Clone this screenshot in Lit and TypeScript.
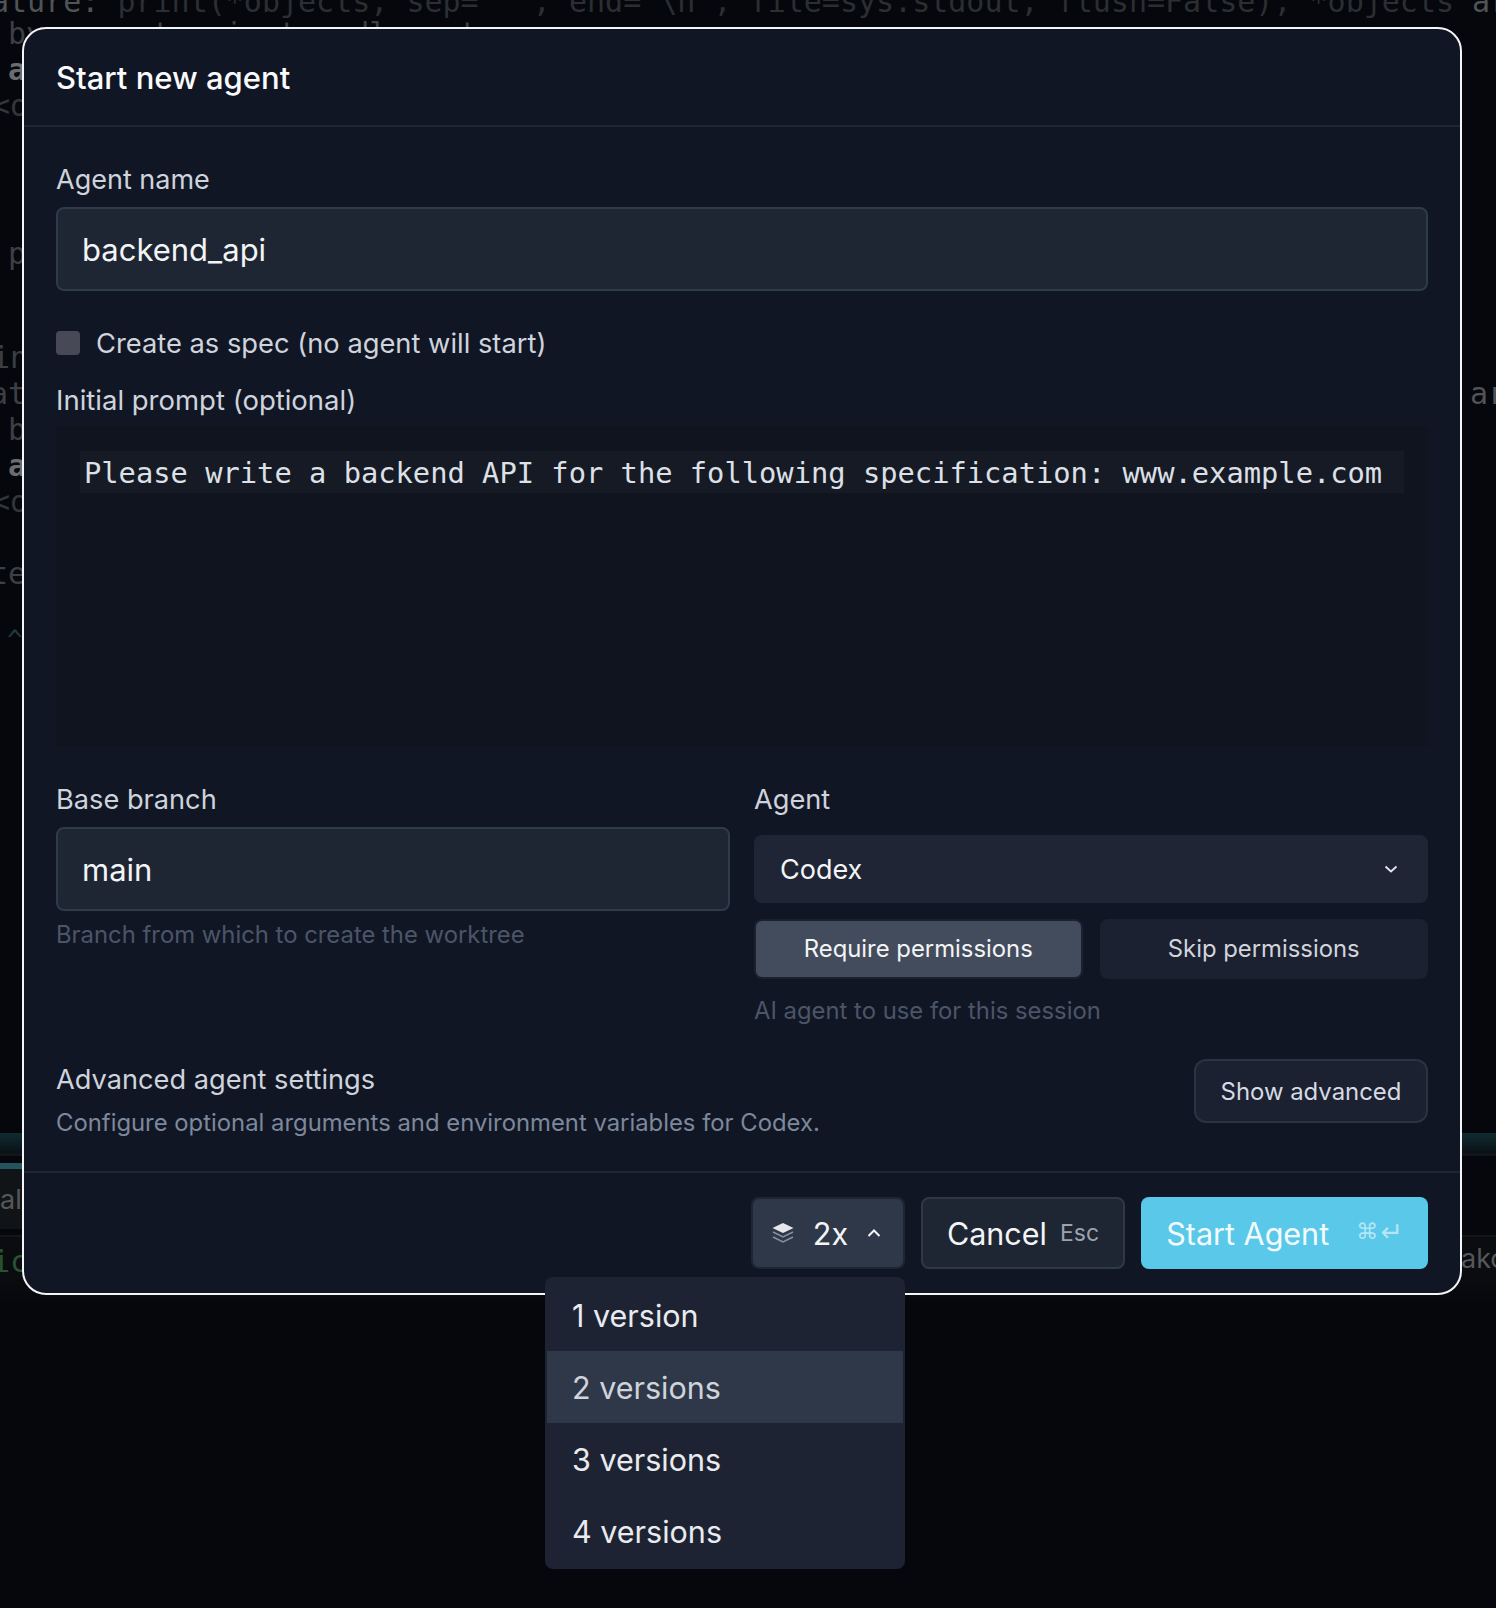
import { LitElement, html, css } from "lit";
import { customElement } from "lit/decorators.js";

@customElement("app-root")
export class AppRoot extends LitElement {
  static styles = css`
    :host { display: block; position: relative; width: 1496px; height: 1608px; overflow: hidden; background: #05070c; font-family: Inter, "Noto Sans", sans-serif; color: #f3f4f6; }
    * { box-sizing: border-box; }
    .bg { position: absolute; inset: 0; font-family: "DejaVu Sans Mono", monospace; font-size: 30px; color: #3c3f44; }
    .bg span { position: absolute; white-space: pre; line-height: 36px; }
    .bg span span { position: static; }
    .bg .dim { color: #2b2e33; }
    .bg .hid { color: #0c0e12; }
    .bg .lit { color: #505357; }
    .bg .faint { color: #33363b; }
    .bg .bold { font-weight: 700; color: #6a6d70; }
    .bg .green { color: #2a5230; }
    .bg .caret { color: #1f3a3e; font-size: 26px; }
    .bg .sans { font-family: Inter, sans-serif; color: #55585b; font-size: 27px; }
    .bar1 { position: absolute; left: 0; right: 0; top: 1133px; height: 20px; background: linear-gradient(#0f2c31, #0a1116); }
    .bar1b { position: absolute; left: 0; right: 0; top: 1153px; height: 3px; background: #10151a; }
    .bar2 { position: absolute; left: 0; width: 30px; top: 1163px; height: 6px; background: #24555f; }
    .bar3 { position: absolute; left: 0; width: 30px; top: 1169px; height: 60px; background: #101417; }
    .bar4 { position: absolute; left: 0; right: 0; top: 1235px; height: 70px; background: linear-gradient(#0a0c10 60%, #05070c); border-top: 2px solid #14171a; }
    .modal { position: absolute; left: 22px; top: 27px; width: 1440px; height: 1268px; display: flex; flex-direction: column; background: #111625; border: 2px solid #f4f5f7; border-radius: 24px; }
    .head { height: 98px; padding: 0 32px; display: flex; align-items: center; border-bottom: 2px solid #1e2533; font-size: 31px; font-weight: 500; color: #f9fafb; }
    .body { flex: 1; padding: 32px 32px 0; display: flex; flex-direction: column; }
    label, .lbl { display: block; font-size: 27.2px; line-height: 40px; color: #ced3dc; }
    .top-label { padding-top: 1px; font-size: 27px; }
    .input { height: 84px; margin-top: 7px; padding: 0 24px; display: flex; align-items: center; background: #1e2533; border: 2px solid #2f3a4b; border-radius: 8px; font-size: 31px; color: #f3f4f6; }
    .check { display: flex; align-items: center; gap: 16px; margin-top: 32px; height: 40px; font-size: 27.3px; color: #ced3dc; }
    .box { width: 24px; height: 24px; border-radius: 4px; background: #474a56; }
    .prompt-label { margin-top: 15px; padding-top: 2px; font-size: 27.5px; }
    .prompt { margin-top: 6px; height: 320px; padding: 25px 24px; background: #0f141e; }
    .line { font-family: "DejaVu Sans Mono", monospace; font-size: 28.75px; line-height: 44px; white-space: pre; color: #dde0e6; background: #151a25; padding: 0 4px; height: 42px; }
    .cols { display: grid; grid-template-columns: 1fr 1fr; gap: 24px; margin-top: 33px; }
    .cols label { padding-top: 1px; }
    .cols .input { margin-top: 7px; }
    .hint { font-size: 23.85px; line-height: 36px; color: #4b5568; margin-top: 6px; }
    .hint.agent { margin-top: 14px; }
    .select { height: 68px; margin-top: 15px; padding: 0 30px 0 26px; display: flex; align-items: center; justify-content: space-between; background: #1f2535; border-radius: 8px; font-size: 27px; color: #f3f4f6; }
    .seg { display: grid; grid-template-columns: 1fr 1fr; gap: 17px; margin-top: 16px; }
    .seg div { height: 60px; padding-bottom: 1px; display: flex; align-items: center; justify-content: center; border-radius: 8px; font-size: 23.85px; background: #1b2131; color: #d1d5db; }
    .seg .on { background: #434c5c; color: #f3f4f6; border: 2px solid #1b2131; }
    .adv { display: flex; justify-content: space-between; align-items: flex-start; margin-top: 31px; }
    .adv .desc { font-size: 23.85px; line-height: 36px; color: #7c889b; margin-top: 5px; }
    .btn-adv { height: 64px; width: 234px; margin-top: -1px; display: flex; align-items: center; justify-content: center; border: 2px solid #2b3342; border-radius: 12px; background: #1b2131; font-size: 23.9px; color: #d6dae1; }
    .foot { height: 122px; padding: 0 32px; border-top: 2px solid #1e2533; display: flex; align-items: center; justify-content: flex-end; gap: 16px; }
    .btn { height: 72px; display: flex; align-items: center; border-radius: 8px; font-size: 30.5px; }
    .ver { width: 154px; padding-right: 3px; background: #2f3848; border: 2px solid #1e2533; justify-content: center; gap: 19px; color: #f3f4f6; }
    .cancel { width: 204px; background: #1e2533; border: 2px solid #2f3848; justify-content: center; gap: 13px; color: #f3f4f6; }
    .cancel small { font-size: 23px; color: #9ca3af; }
    .start { width: 287px; background: #5ac8e8; color: #f4fbfe; justify-content: center; gap: 27px; }
    .keys { display: flex; align-items: center; gap: 2px; font-family: "DejaVu Sans", sans-serif; color: #b4e5f4; line-height: 20px; margin-top: -2px; }
    .keys .cmd { font-size: 22px; }
    .keys .ret { font-size: 27px; }
    .menu { position: absolute; left: 545px; top: 1277px; width: 360px; height: 292px; padding: 2px; background: #1e2333; border-radius: 8px; }
    .menu div { height: 72px; padding: 0 25px; display: flex; align-items: center; font-size: 30.5px; color: #e9ebef; }
    .menu .sel { background: #2f3848; color: #ced3dc; }
  `;

  render() {
    return html`
      <div class="bar1"></div><div class="bar1b"></div><div class="bar2"></div><div class="bar3"></div><div class="bar4"></div>
      <div class="bg">
        <span class="dim" style="left:-9px;top:-16px"><span class="lit">ature:</span> print(*objects, sep=<span class="hid">' '</span>, end=<span class="hid">'</span>\\n<span class="hid">'</span>, file=sys.stdout, flush=False), *objects <span class="lit">ar</span></span>
        <span style="left:8px;top:16px">by      t   i  t   dl    t</span>
        <span class="bold" style="left:8px;top:52px">a</span>
        <span class="faint" style="left:-8px;top:88px">&lt;o</span>
        <span style="left:8px;top:236px">p</span>
        <span style="left:-14px;top:296px">-</span>
        <span style="left:-8px;top:340px">in</span>
        <span style="left:-10px;top:376px">at</span>
        <span style="left:8px;top:412px">b</span>
        <span class="bold" style="left:8px;top:448px">a</span>
        <span class="faint" style="left:-8px;top:484px">&lt;o</span>
        <span style="left:-10px;top:556px">te</span>
        <span class="caret" style="left:7px;top:622px">^</span>
        <span class="lit" style="left:1470px;top:376px">ar</span>
        <span class="green" style="left:-8px;top:1244px">ic</span>
        <span class="sans" style="left:0;top:1182px">al</span>
        <span class="sans" style="left:1461px;top:1241px">ako</span>
      </div>
      <div class="modal">
        <div class="head">Start new agent</div>
        <div class="body">
          <label class="top-label">Agent name</label>
          <div class="input">backend_api</div>
          <div class="check"><span class="box"></span>Create as spec (no agent will start)</div>
          <label class="prompt-label">Initial prompt (optional)</label>
          <div class="prompt"><div class="line">Please write a backend API for the following specification: www.example.com</div></div>
          <div class="cols">
            <div>
              <label>Base branch</label>
              <div class="input">main</div>
              <div class="hint">Branch from which to create the worktree</div>
            </div>
            <div>
              <label>Agent</label>
              <div class="select">Codex
                <svg width="14" height="10" viewBox="0 0 14 10" fill="none" stroke="#e5e7eb" stroke-width="1.8"><path d="M1.5 2.5l5.5 5 5.5-5"/></svg>
              </div>
              <div class="seg"><div class="on">Require permissions</div><div>Skip permissions</div></div>
              <div class="hint agent">AI agent to use for this session</div>
            </div>
          </div>
          <div class="adv">
            <div><div class="lbl">Advanced agent settings</div><div class="desc">Configure optional arguments and environment variables for Codex.</div></div>
            <div class="btn-adv">Show advanced</div>
          </div>
        </div>
        <div class="foot">
          <div class="btn ver">
            <svg width="22" height="20" viewBox="0 0 22 20" fill="none"><path d="M11 0l10.5 5L11 10 .5 5z" fill="#e5e7eb"/><path d="M1 9l10 5 10-5M1 14l10 5 10-5" stroke="#8a919e" stroke-width="1.5"/></svg>
            <span>2x</span>
            <svg width="14" height="10" viewBox="0 0 14 10" fill="none" stroke="#f3f4f6" stroke-width="2"><path d="M1.5 8l5.5-5.5L12.5 8"/></svg>
          </div>
          <div class="btn cancel"><span>Cancel</span><small>Esc</small></div>
          <div class="btn start"><span>Start Agent</span><span class="keys"><span class="cmd">⌘</span><span class="ret">↵</span></span></div>
        </div>
      </div>
      <div class="menu">
        <div>1 version</div><div class="sel">2 versions</div><div>3 versions</div><div>4 versions</div>
      </div>
    `;
  }
}
